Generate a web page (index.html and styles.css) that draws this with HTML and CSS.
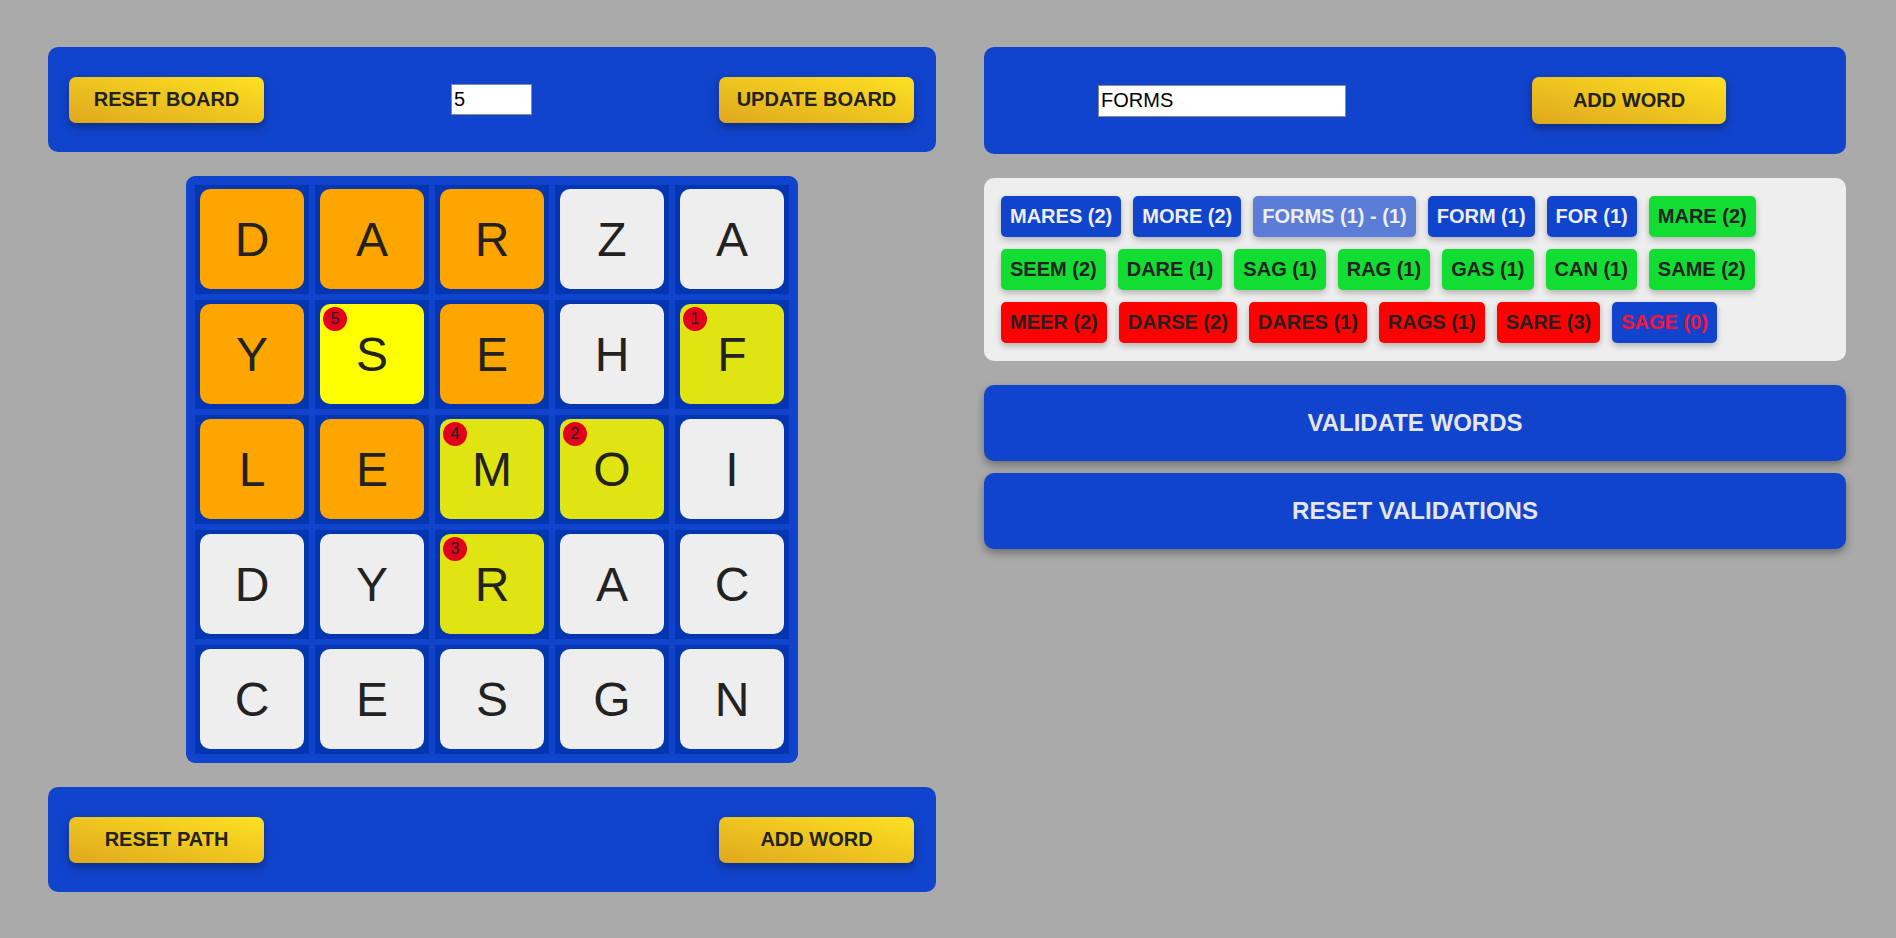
FILE: index.html
```html
<!DOCTYPE html>
<html>
<head>
<meta charset="utf-8">
<link rel="stylesheet" href="styles.css">
</head>
<body>
<div class="app">
  <div class="col-left">
    <div class="panel">
      <button class="btn-gold">RESET BOARD</button>
      <input class="size-input" type="text" value="5">
      <button class="btn-gold">UPDATE BOARD</button>
    </div>
    <div class="board">
      <div class="cell"><div class="tile orange">D</div></div>
      <div class="cell"><div class="tile orange">A</div></div>
      <div class="cell"><div class="tile orange">R</div></div>
      <div class="cell"><div class="tile white">Z</div></div>
      <div class="cell"><div class="tile white">A</div></div>

      <div class="cell"><div class="tile orange">Y</div></div>
      <div class="cell"><div class="tile yellow"><span class="badge">5</span>S</div></div>
      <div class="cell"><div class="tile orange">E</div></div>
      <div class="cell"><div class="tile white">H</div></div>
      <div class="cell"><div class="tile lime"><span class="badge">1</span>F</div></div>

      <div class="cell"><div class="tile orange">L</div></div>
      <div class="cell"><div class="tile orange">E</div></div>
      <div class="cell"><div class="tile lime"><span class="badge">4</span>M</div></div>
      <div class="cell"><div class="tile lime"><span class="badge">2</span>O</div></div>
      <div class="cell"><div class="tile white">I</div></div>

      <div class="cell"><div class="tile white">D</div></div>
      <div class="cell"><div class="tile white">Y</div></div>
      <div class="cell"><div class="tile lime"><span class="badge">3</span>R</div></div>
      <div class="cell"><div class="tile white">A</div></div>
      <div class="cell"><div class="tile white">C</div></div>

      <div class="cell"><div class="tile white">C</div></div>
      <div class="cell"><div class="tile white">E</div></div>
      <div class="cell"><div class="tile white">S</div></div>
      <div class="cell"><div class="tile white">G</div></div>
      <div class="cell"><div class="tile white">N</div></div>
    </div>
    <div class="panel">
      <button class="btn-gold">RESET PATH</button>
      <button class="btn-gold">ADD WORD</button>
    </div>
  </div>
  <div class="col-right">
    <div class="panel panel-word">
      <input class="word-input" type="text" value="FORMS">
      <button class="btn-gold btn-add">ADD WORD</button>
    </div>
    <div class="words">
      <span class="chip blue">MARES (2)</span>
      <span class="chip blue">MORE (2)</span>
      <span class="chip light">FORMS (1) - (1)</span>
      <span class="chip blue">FORM (1)</span>
      <span class="chip blue">FOR (1)</span>
      <span class="chip green">MARE (2)</span>
      <span class="chip green">SEEM (2)</span>
      <span class="chip green">DARE (1)</span>
      <span class="chip green">SAG (1)</span>
      <span class="chip green">RAG (1)</span>
      <span class="chip green">GAS (1)</span>
      <span class="chip green">CAN (1)</span>
      <span class="chip green">SAME (2)</span>
      <span class="chip red">MEER (2)</span>
      <span class="chip red">DARSE (2)</span>
      <span class="chip red">DARES (1)</span>
      <span class="chip red">RAGS (1)</span>
      <span class="chip red">SARE (3)</span>
      <span class="chip blue-red">SAGE (0)</span>
    </div>
    <button class="btn-wide">VALIDATE WORDS</button>
    <button class="btn-wide">RESET VALIDATIONS</button>
  </div>
</div>
</body>
</html>
```

FILE: styles.css
```css
* { box-sizing: border-box; }
html, body {
  margin: 0;
  padding: 0;
  background: #aaaaaa;
  font-family: "Liberation Sans", Arial, sans-serif;
}
.app {
  display: flex;
  align-items: flex-start;
  gap: 48px;
  padding: 47px 50px 0 48px;
}
.col-left {
  width: 888px;
  display: flex;
  flex-direction: column;
  align-items: center;
  gap: 24px;
}
.col-right {
  width: 862px;
  display: flex;
  flex-direction: column;
  gap: 12px;
}
.panel {
  width: 100%;
  height: 105px;
  background: #1144cc;
  border-radius: 10px;
  display: flex;
  align-items: center;
  justify-content: space-between;
  padding: 0 22px 0 21px;
}
.panel-word {
  height: 107px;
  padding: 0 120px 0 114px;
  margin-bottom: 12px;
}
.btn-gold {
  width: 195px;
  height: 46px;
  border: none;
  border-radius: 7px;
  background: linear-gradient(to top right, #dfa81e, #fde122);
  box-shadow: 0 4px 8px rgba(0, 0, 0, 0.35);
  color: #222;
  font-family: "Liberation Sans", Arial, sans-serif;
  font-weight: bold;
  font-size: 20px;
  padding: 0;
}
.btn-add {
  height: 47px;
  width: 194px;
}
.size-input, .word-input {
  font-family: "Liberation Sans", Arial, sans-serif;
  font-size: 20px;
  color: #000;
  background: #fff;
  border: 1px solid #8a8a8a;
  padding: 1px 2px;
  margin: 0;
  outline: none;
}
.size-input {
  width: 81px;
  height: 31px;
}
.word-input {
  width: 248px;
  height: 32px;
}
.board {
  display: grid;
  grid-template-columns: repeat(5, 114px);
  grid-template-rows: repeat(5, 109px);
  gap: 6px;
  padding: 9px;
  background: #1144cc;
  border-radius: 9px;
}
.cell {
  background: #0336b0;
  padding: 4px 5px 5px 5px;
}
.tile {
  position: relative;
  width: 100%;
  height: 100%;
  border-radius: 10px;
  display: flex;
  align-items: center;
  justify-content: center;
  font-size: 48px;
  color: #222;
}
.tile.orange { background: #ffa500; }
.tile.white { background: #eeeeee; }
.tile.yellow { background: #ffff00; }
.tile.lime { background: #e0e412; }
.badge {
  position: absolute;
  top: 3px;
  left: 3px;
  width: 24px;
  height: 24px;
  border-radius: 50%;
  background: #e2001a;
  color: #222;
  font-size: 16px;
  line-height: 24px;
  text-align: center;
}
.words {
  background: #eeeeee;
  border-radius: 10px;
  padding: 18px 17px;
  display: flex;
  flex-wrap: wrap;
  gap: 12px;
  margin-bottom: 12px;
}
.chip {
  display: inline-block;
  padding: 9px 9px;
  line-height: 23px;
  font-size: 20px;
  font-weight: bold;
  border-radius: 5px;
  box-shadow: 0 3px 6px rgba(0, 0, 0, 0.25);
}
.chip.blue { background: #1144cc; color: #eeeeee; }
.chip.light { background: #5b7dd8; color: #eeeeee; }
.chip.green { background: #11dd33; color: #222; }
.chip.red { background: #ff0000; color: #222; }
.chip.blue-red { background: #1144cc; color: #ff1133; }
.btn-wide {
  width: 100%;
  height: 76px;
  border: none;
  border-radius: 10px;
  background: #1144cc;
  color: #e6e6e6;
  font-family: "Liberation Sans", Arial, sans-serif;
  font-weight: bold;
  font-size: 24px;
  box-shadow: 0 4px 8px rgba(0, 0, 0, 0.35);
  padding: 0;
}
```
